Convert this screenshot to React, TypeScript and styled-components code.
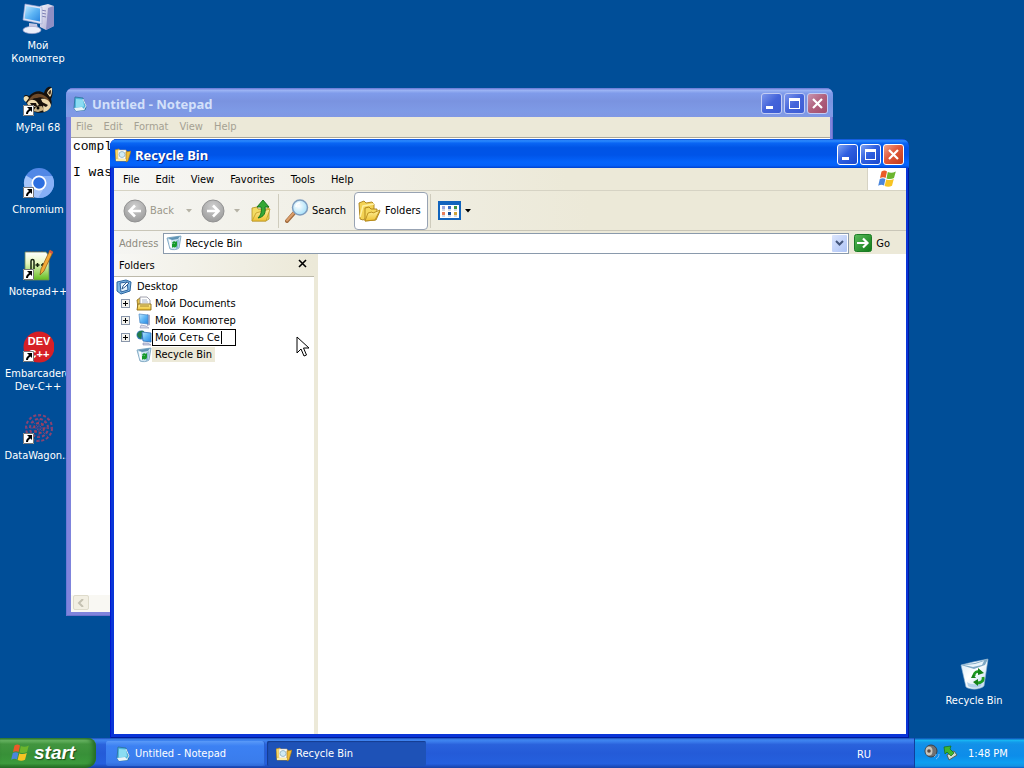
import React from "react";
import styled, { createGlobalStyle, css } from "styled-components";

const uiFont = '"DejaVu Sans Condensed", "Noto Sans", sans-serif';
const titleFont = '"Noto Sans", "DejaVu Sans", sans-serif';

const GlobalStyle = createGlobalStyle`
  * { box-sizing: border-box; }
  html, body { margin: 0; height: 100%; }
  body { font: 11px/13px "Noto Sans", sans-serif; color: #000; overflow: hidden; }
  button, input, textarea { font: inherit; color: inherit; margin: 0; padding: 0; border: 0; background: none; outline: 0; }
  button { white-space: nowrap; }
  svg { display: block; flex: none; }
  a { color: inherit; text-decoration: none; }
`;

/* ---------- shared gradients ---------- */

const Hidden = styled.svg`
  position: absolute;
`;

const Defs = () => (
  <Hidden width="0" height="0" aria-hidden="true">
    <defs>
      <linearGradient id="screen" x1="0" y1="0" x2="1" y2="1">
        <stop offset="0" stopColor="#bfe9ff" />
        <stop offset=".5" stopColor="#5fb6f5" />
        <stop offset="1" stopColor="#2a86e0" />
      </linearGradient>
      <linearGradient id="case" x1="0" y1="0" x2="1" y2="1">
        <stop offset="0" stopColor="#f4f4fc" />
        <stop offset="1" stopColor="#a2a2cc" />
      </linearGradient>
      <linearGradient id="bin" x1="0" y1="0" x2="1" y2="1">
        <stop offset="0" stopColor="#cfe6f5" />
        <stop offset=".45" stopColor="#ffffff" />
        <stop offset="1" stopColor="#b5d3ea" />
      </linearGradient>
      <linearGradient id="folder" x1="0" y1="0" x2="0" y2="1">
        <stop offset="0" stopColor="#fff3a0" />
        <stop offset="1" stopColor="#efc132" />
      </linearGradient>
      <radialGradient id="grey" cx=".5" cy=".3" r=".7">
        <stop offset="0" stopColor="#cfcfcf" />
        <stop offset="1" stopColor="#9c9c9c" />
      </radialGradient>
      <radialGradient id="lens" cx=".4" cy=".4" r=".7">
        <stop offset="0" stopColor="#ffffff" />
        <stop offset="1" stopColor="#9bdcf8" />
      </radialGradient>
      <linearGradient id="go" x1="0" y1="0" x2="1" y2="1">
        <stop offset="0" stopColor="#5cbb5c" />
        <stop offset="1" stopColor="#0e7a15" />
      </linearGradient>
      <linearGradient id="npp" x1="0" y1="0" x2="0" y2="1">
        <stop offset="0" stopColor="#ffffff" />
        <stop offset=".4" stopColor="#e6f6c0" />
        <stop offset="1" stopColor="#62bc1e" />
      </linearGradient>
    </defs>
  </Hidden>
);

/* ---------- icons ---------- */

const ComputerIcon = () => (
  <svg width="32" height="32" viewBox="0 0 32 32" aria-hidden="true">
    <path d="M18 3l8-2 6 2v20l-8 4-6-3z" fill="url(#case)" />
    <path d="M26 5l6-2v20l-8 4z" fill="#8f8fc4" />
    <path d="M19 7l5 1M19 10l5 1M19 13l5 1" stroke="#7d80b4" />
    <path d="M3 1l17 3v17L1 17z" fill="#dfe4f6" stroke="#9aa4d2" strokeWidth=".6" />
    <path d="M4 3l14 2.400v13L2.500 15.500z" fill="url(#screen)" />
    <path d="M7 20l8 1 1 5-9-1z" fill="#c3c6e2" />
    <ellipse cx="10" cy="27" rx="9" ry="3.600" fill="#eceefa" stroke="#a6a9d0" strokeWidth=".7" />
  </svg>
);

const RaccoonIcon = () => (
  <svg width="32" height="32" viewBox="0 0 32 32" aria-hidden="true">
    <path d="M2 13c-1-3 2-4 5-2 5-5 10-6 15-3 1-4 4-7 7-6 2 3 2 8 0 12 2 6-1 11-6 13-7 2-15 0-17-6z" fill="#17110c" />
    <path d="M2 12c2-2 4-1 5 1l-3 4c-2-1-3-3-2-5zM25 8c1-3 3-5 5-5 0 3 0 7-2 9z" fill="#f1dfb0" />
    <path d="M26 8c1-2 2-3 3-3 0 2 0 4-1 5z" fill="#4b3220" />
    <path d="M9 12c4-4 9-4 14-1 3 2 5 4 5 8-4-6-8-8-13-6-4 0-7 2-9 5 0-2 1-4 3-6z" fill="#6d4a2a" />
    <path d="M5 18c3-4 7-4 10-1l2 3-5 2c-3 1-6-1-7-4zM19 14c5-1 9 2 10 6 0 3-3 6-7 7-2-1 1-5-3-13z" fill="#ecd9ae" />
    <path d="M8 18l6 0 1 3-5 0zM20 17l6 3-2 2-4-2z" fill="#1a120d" />
    <path d="M14 22l6-1 2 4-6 2-5-1z" fill="#c8b184" />
    <circle cx="16" cy="23" r="1.500" fill="#000" />
  </svg>
);

const ChromiumIcon = () => (
  <svg width="32" height="32" viewBox="0 0 32 32" aria-hidden="true">
    <circle cx="17" cy="16" r="15" fill="#5288e6" />
    <path d="M17 16L4 8.500A15 15 0 0 0 17 31l6-11z" fill="#a5c5fa" />
    <path d="M17 9h13.300A15 15 0 0 1 16 31l7.500-12z" fill="#86b0f7" />
    <circle cx="17" cy="16" r="7.500" fill="#fff" />
    <circle cx="17" cy="16" r="5.800" fill="#2d6fe0" />
  </svg>
);

const NppIcon = () => (
  <svg width="32" height="32" viewBox="0 0 32 32" aria-hidden="true">
    <path d="M3 3h21l3 4v24H3z" fill="url(#npp)" stroke="#6f8a58" strokeWidth=".8" />
    <path d="M5 3v-1M8 3v-1M11 3v-1M14 3v-1M17 3v-1M20 3v-1" stroke="#556" strokeWidth="1.500" />
    <path d="M9 20v-8q0-1.500 1.500-1.500T12 12v8M13.500 16h4M15.500 14v4M19 16h4M21 14v4" stroke="#16240f" strokeWidth="1.500" fill="none" />
    <path d="M28 1l3 2-9 19-4 4 1-6z" fill="#f2ab37" stroke="#8d5313" strokeWidth=".7" />
    <path d="M28 1l3 2-1 2-3-2z" fill="#d5524b" />
  </svg>
);

const DevIcon = () => (
  <svg width="32" height="32" viewBox="0 0 32 32" aria-hidden="true">
    <circle cx="17" cy="16" r="15.500" fill="#d61f26" />
    <text x="17" y="14" textAnchor="middle" fontFamily="Liberation Sans, sans-serif" fontWeight="700" fontSize="11" fill="#fff">DEV</text>
    <text x="17" y="27" textAnchor="middle" fontFamily="Liberation Sans, sans-serif" fontWeight="700" fontSize="11" fill="#fff">C++</text>
  </svg>
);

const WagonIcon = () => (
  <svg width="32" height="32" viewBox="0 0 32 32" aria-hidden="true">
    <g fill="none" stroke="#8d4470" strokeWidth="2" strokeDasharray="3 2">
      <circle cx="17" cy="15" r="13" />
      <circle cx="17" cy="15" r="9" strokeDashoffset="2" />
      <circle cx="17" cy="15" r="5" stroke="#a03f5c" />
      <path d="M17 1v28M3 15h28M7 5l20 20M27 5L7 25" stroke="#6d4380" strokeWidth="1" />
    </g>
  </svg>
);

const BinIcon = () => (
  <svg width="32" height="32" viewBox="0 0 32 32" aria-hidden="true">
    <path d="M3 7l12-3 15-3-4 27c-4 4-14 4-18 1z" fill="url(#bin)" stroke="#8fb4d2" strokeWidth=".6" />
    <path d="M3 7l14-2 13-4-3 6-11 4z" fill="#7da7c4" />
    <path d="M6 7l11-1 9-3-2 4-9 2z" fill="#e8f4fb" />
    <path d="M9 24c4 3 10 3 15 0l-1 4c-4 2-10 2-13 0z" fill="#9cc4e4" opacity=".7" />
    <g fill="none" stroke="#1d9a20" strokeWidth="2.800">
      <path d="M16 18c0-4 3-5 6-4" />
      <path d="M25 19c1 4-2 6-6 6" />
    </g>
    <path d="M20 10l6 5-6 2zM20 21v7l-5-4zM15 16l3 4h-5z" fill="#158018" />
  </svg>
);

const SmallBinIcon = () => (
  <svg width="16" height="16" viewBox="0 0 16 16" aria-hidden="true">
    <path d="M1 3l6-1 8-1-2 12c-2 2-7 2-9 1z" fill="#cfe5f2" stroke="#6f9cba" strokeWidth=".8" />
    <path d="M2 3l7-1 5-1-2 3-6 1z" fill="#5f93b4" />
    <path d="M3 5l2 0 1 8-2-1z" fill="#fff" />
    <path d="M13 4l-1 9-2 1V6z" fill="#8db9d2" />
    <path d="M6 8c1-2 3-2 4-1l1-1v4H8l1-1c-1-1-1 0-2 0zM11 10c0 2-2 3-4 2l-1 1V9h3z" fill="#169a2a" />
  </svg>
);

const NotepadIcon = () => (
  <svg width="16" height="16" viewBox="0 0 16 16" aria-hidden="true">
    <path d="M3 1l8 1 3 9-1 3-9 1-2-3z" fill="#4fb6dc" stroke="#2b6f98" strokeWidth=".8" />
    <path d="M4 3l7 .500 1 7-8 1z" fill="#8bdcf2" />
    <path d="M2 12l8-1 3 3-9 1z" fill="#e9f3f8" />
    <path d="M11 3l3 7-2 3" stroke="#dbe8ef" fill="none" />
  </svg>
);

const FolderSearchIcon = () => (
  <svg width="16" height="16" viewBox="0 0 16 16" aria-hidden="true">
    <path d="M0 3l4-1 1 2h7v10H1z" fill="#f8d968" stroke="#b98a1f" strokeWidth=".7" />
    <path d="M3 3h8v9H3z" fill="#fff" stroke="#c8b686" strokeWidth=".5" />
    <circle cx="7" cy="7.500" r="3" fill="#cfeaf4" stroke="#8fb0bb" strokeWidth=".8" />
    <path d="M11 5l5-1-3 10-2 1z" fill="#f0bd38" stroke="#9f741a" strokeWidth=".6" />
    <path d="M1 12h10v2H1z" fill="#fdeea6" />
  </svg>
);

const Flag = () => (
  <svg width="20" height="20" viewBox="0 0 20 20" aria-hidden="true">
    <path d="M4.500 2.500C7 1 8.500 1.500 10 2.500L8.600 9C7 8 5.500 7.800 3 9z" fill="#ea5a28" />
    <path d="M10.800 3c2.500 1.300 5 1 8-.5L17 9c-2.500 1.300-5 1.300-7.500.4z" fill="#6cb52d" />
    <path d="M2.800 10C5 8.800 6.800 9 8.400 10L7 16.500c-1.600-1-3.500-1-5.800.2z" fill="#4a86dc" />
    <path d="M9.200 10.400c2.400 1 5 1 7.600-.3L15 16.800c-2.400 1.200-5 1.200-7.400.1z" fill="#f7c423" />
  </svg>
);

const RoundArrow = ({ forward }: { forward?: boolean }) => (
  <svg width="24" height="24" viewBox="0 0 24 24" aria-hidden="true">
    <circle cx="12" cy="12" r="11" fill="url(#grey)" stroke="#929292" />
    <path d={forward ? "M6 12h11M12 6.500l5.500 5.500L12 17.500" : "M18 12H7M12 6.500L6.500 12l5.500 5.500"} fill="none" stroke="#fff" strokeWidth="2.600" />
  </svg>
);

const UpFolderIcon = () => (
  <svg width="24" height="24" viewBox="0 0 24 24" aria-hidden="true">
    <path d="M3 9l5-1 1 2h9l1-2 1 1v11l-3 2H3z" fill="#f3dc62" stroke="#b0901f" strokeWidth=".8" />
    <path d="M3 22l4-8 14-4-4 12z" fill="url(#folder)" stroke="#c09b26" strokeWidth=".8" />
    <path d="M14 1l6 7h-4c1 6-1 10-7 11 3-3 4-7 3-11H8z" fill="#35a835" stroke="#137019" strokeWidth=".9" />
  </svg>
);

const SearchIcon = () => (
  <svg width="24" height="24" viewBox="0 0 24 24" aria-hidden="true">
    <path d="M10 13L2 22" stroke="#9f6a3d" strokeWidth="4" strokeLinecap="round" />
    <path d="M9.500 13L2 21.500" stroke="#dc9e6b" strokeWidth="2" strokeLinecap="round" />
    <circle cx="15" cy="8.500" r="7.500" fill="url(#lens)" stroke="#7e9dbf" strokeWidth="1.500" />
    <path d="M11 8c0-3 2-4 4-4" fill="none" stroke="#fff" strokeWidth="1.500" />
  </svg>
);

const FoldersIcon = () => (
  <svg width="24" height="24" viewBox="0 0 24 24" aria-hidden="true">
    <path d="M1 4l5-2 2 2 6-1 2 2v10l-11 6-3-1z" fill="#f3d254" stroke="#a97f16" strokeWidth=".9" />
    <path d="M2 18L5 7l11-2" fill="none" stroke="#fff0a0" strokeWidth="1.500" />
    <path d="M7 9l4-1 2 2h6v3l3-1-4 9-11 1z" fill="#f6d95e" stroke="#a97f16" strokeWidth=".9" />
    <path d="M7 22l3-8 4-1 1 1 7-3-5 10z" fill="url(#folder)" stroke="#b78a18" strokeWidth=".9" />
  </svg>
);

const ViewsIcon = () => (
  <svg width="24" height="20" viewBox="0 0 24 20" aria-hidden="true">
    <path d="M0 0h23v19H0z" fill="#1264bd" />
    <path d="M2 4h19v13H2z" fill="#fff" />
    <path d="M4 5h3v3H4z" fill="#9aa7df" />
    <path d="M10 5h3v3h-3z" fill="#3f6fc8" />
    <path d="M16 5h3v3h-3z" fill="#3c9440" />
    <path d="M4 11h3v3H4z" fill="#e77f5b" />
    <path d="M10 11h3v3h-3z" fill="#164b94" />
    <path d="M16 11h3v3h-3z" fill="#cda33b" />
    <path d="M4 9h3M10 9h3M16 9h3M4 15h3M10 15h3M16 15h3" stroke="#a9bccc" />
  </svg>
);

const Triangle = ({ colour = "#000" }: { colour?: string }) => (
  <svg width="6" height="4" viewBox="0 0 6 4" aria-hidden="true">
    <path d="M0 0h6L3 3.500z" fill={colour} />
  </svg>
);

const GoIcon = () => (
  <svg width="18" height="18" viewBox="0 0 18 18" aria-hidden="true">
    <rect x=".5" y=".5" width="17" height="17" rx="2" fill="url(#go)" stroke="#1c7c26" />
    <path d="M3 9h10M9 4.500L13.500 9 9 13.500" fill="none" stroke="#fff" strokeWidth="2.200" />
  </svg>
);

const DesktopIcon = () => (
  <svg width="16" height="16" viewBox="0 0 16 16" aria-hidden="true">
    <path d="M1 3l9-2 5 2-1 9-9 3-4-3z" fill="#7db7e4" stroke="#2a649e" />
    <path d="M4 4l7-1 1 8-7 2z" fill="#e3f2fc" stroke="#2b619e" />
    <path d="M6 10l1-3 4-4 2 1-4 4z" fill="#fff" stroke="#204f86" strokeWidth=".9" />
  </svg>
);

const DocumentsIcon = () => (
  <svg width="16" height="16" viewBox="0 0 16 16" aria-hidden="true">
    <path d="M1 4l3-2 1 2v9l-3-1z" fill="#e6c34e" stroke="#8c6a12" strokeWidth=".8" />
    <path d="M4 1h7l3 3v6H4z" fill="#fff" stroke="#8b8b9a" strokeWidth=".8" />
    <path d="M6 4h5M6 6h6" stroke="#a9b4c8" />
    <path d="M1 14l1-6h13v6z" fill="url(#folder)" stroke="#8c6a12" strokeWidth=".9" />
    <path d="M4 10h9" stroke="#a4812a" />
  </svg>
);

const SmallComputerIcon = () => (
  <svg width="16" height="16" viewBox="0 0 16 16" aria-hidden="true">
    <path d="M11 1l3 1v10l-3 1z" fill="#a9adc9" />
    <path d="M3 1l9 1v9l-8-1z" fill="url(#screen)" stroke="#4b86c4" strokeWidth=".7" />
    <path d="M5 12l5 1 3 2H4z" fill="#d8daea" stroke="#8d91b4" strokeWidth=".6" />
  </svg>
);

const NetworkIcon = () => (
  <svg width="16" height="16" viewBox="0 0 16 16" aria-hidden="true">
    <circle cx="5" cy="5" r="4.500" fill="#3c7ec6" />
    <path d="M1 4c2-3 4-4 7-3L6 5l-1 4C3 8 1 7 1 4z" fill="#237c4a" />
    <path d="M6 2l9 1v9l-8-1z" fill="url(#screen)" stroke="#2f6eb4" strokeWidth=".8" />
    <path d="M7 13l5 0 3 2H7z" fill="#cfd3e6" stroke="#8188b0" strokeWidth=".6" />
  </svg>
);

const SpeakerIcon = () => (
  <svg width="18" height="18" viewBox="0 0 18 18" aria-hidden="true">
    <ellipse cx="8" cy="7" rx="6" ry="6" fill="#6f7071" stroke="#3c4046" />
    <ellipse cx="6" cy="7" rx="3.500" ry="4.500" fill="#c9c5bb" />
    <circle cx="6" cy="7" r="1.800" fill="#5a4b45" />
    <path d="M13 15c2-1 3-3 3-5M11 13c1-1 2-2 2-3" fill="none" stroke="#8fc1f1" />
  </svg>
);

const EjectIcon = () => (
  <svg width="16" height="16" viewBox="0 0 16 16" aria-hidden="true">
    <path d="M4 10l7-4 3 4-8 5z" fill="#d4dcd2" stroke="#4c5c50" strokeWidth=".9" />
    <path d="M1 2l7-1-1 3 4 4-3 3-4-4-2 2z" fill="#3fb52f" stroke="#156f14" strokeWidth=".7" />
  </svg>
);

const ShortcutArrow = () => (
  <svg width="11" height="11" viewBox="0 0 11 11" aria-hidden="true">
    <path d="M0 0h11v11H0z" fill="#fff" />
    <path d="M.5.500h10v10H.5z" fill="none" stroke="#777" />
    <path d="M4 2h5v5L7.500 5.500C6 6.500 5 7.500 5 9H3c0-2 1-3.500 3-5z" fill="#000" />
  </svg>
);

/* ---------- desktop ---------- */

const Desktop = styled.main`
  position: relative;
  display: flex;
  flex-direction: column;
  height: 100vh;
  background: #004e98;
  overflow: hidden;
`;

const Surface = styled.div`
  position: relative;
  flex: 1;
  display: flex;
  justify-content: space-between;
  align-items: flex-end;
`;

const ShortcutColumn = styled.nav`
  display: grid;
  grid-auto-rows: 82px;
  width: 76px;
  align-self: flex-start;
  padding-top: 3px;
`;

const Shortcut = styled.a`
  display: flex;
  flex-direction: column;
  align-items: center;
  gap: 4px;
  width: 76px;
  color: #fff;
  font: 11px/13px ${uiFont};
  text-align: center;
`;

const BinCorner = styled.div`
  height: 80px;
  padding-right: 12px;
`;

const Picture = styled.span`
  position: relative;
`;

const Badge = styled.span`
  position: absolute;
  left: 1px;
  bottom: 1px;
`;

const Label = styled.span`
  width: 72px;
`;

const shortcuts = [
  { label: "Мой Компютер", icon: <ComputerIcon />, linked: false },
  { label: "MyPal 68", icon: <RaccoonIcon />, linked: true },
  { label: "Chromium", icon: <ChromiumIcon />, linked: true },
  { label: "Notepad++", icon: <NppIcon />, linked: true },
  { label: "Embarcadero Dev-C++", icon: <DevIcon />, linked: true },
  { label: "DataWagon...", icon: <WagonIcon />, linked: true },
];

/* ---------- windows ---------- */

const Frame = styled.section<{ $active?: boolean }>`
  position: absolute;
  display: flex;
  flex-direction: column;
  border-radius: 7px 7px 0 0;
  overflow: hidden;
  ${({ $active }) =>
    $active
      ? css`
          inset: 139px 115px 0 110px;
          padding: 0 3px 4px 4px;
          background: #0a35d8;
          box-shadow: inset 1px 0 #0019cf, inset -1px -1px #001a9c;
        `
      : css`
          inset: 88px 191px 122px 66px;
          padding: 0 3px 4px 5px;
          background: #7f84dc;
          box-shadow: inset 1px 0 #6a78d6, inset -1px -1px #6d70cc;
        `}
`;

const TitleBar = styled.header<{ $active?: boolean }>`
  display: flex;
  align-items: center;
  gap: 4px;
  height: 29px;
  flex: none;
  margin: 0 -3px 0 -5px;
  padding: 2px 5px 0 6px;
  font: bold 13px/18px ${titleFont};
  color: ${(p) => (p.$active ? "#fff" : "#d3e0fa")};
  text-shadow: ${(p) => (p.$active ? "1px 1px #0a2a8c" : "none")};
  background: ${(p) =>
    p.$active
      ? "linear-gradient(#0a4ad6 0, #2c8cff 6%, #0a66f4 14%, #0054e6 30%, #0054e8 55%, #0464fc 80%, #0460f8 92%, #0040cc 100%)"
      : "linear-gradient(#6474d4 0, #9cb4f4 8%, #7f9bea 18%, #7a93e0 45%, #7e9ae6 80%, #8098e4 100%)"};
`;

const WindowTitle = styled.h2`
  flex: 1;
  margin: 0;
  font: inherit;
`;

const Controls = styled.div`
  display: flex;
  gap: 2px;
`;

const ControlButton = styled.button<{ $close?: boolean; $active?: boolean }>`
  display: grid;
  place-items: center;
  width: 21px;
  height: 21px;
  border: 1px solid ${(p) => (p.$active ? "#fff" : "#c3cdf4")};
  border-radius: 3px;
  background: ${(p) =>
    p.$close
      ? p.$active
        ? "linear-gradient(135deg, #f0a48c, #e0583a 45%, #c23a1a)"
        : "linear-gradient(135deg, #c795b0, #b0607c 50%, #a04c6c)"
      : p.$active
        ? "linear-gradient(135deg, #7ea4f4, #2f5fe0 45%, #1a48cc)"
        : "linear-gradient(135deg, #7c96ec, #4464da 50%, #3c5cd4)"};
`;

const WindowControls = ({ active }: { active?: boolean }) => (
  <Controls>
    <ControlButton $active={active} aria-label="Minimize">
      <svg width="15" height="15" viewBox="0 0 15 15"><path d="M2 10h7v3H2z" fill="#fff" /></svg>
    </ControlButton>
    <ControlButton $active={active} aria-label="Maximize">
      <svg width="15" height="15" viewBox="0 0 15 15"><path d="M2 2h11v11H2zM3 5v7h9V5z" fillRule="evenodd" fill="#fff" /></svg>
    </ControlButton>
    <ControlButton $active={active} $close aria-label="Close">
      <svg width="15" height="15" viewBox="0 0 15 15"><path d="M3 3l9 9M12 3l-9 9" stroke="#fff" strokeWidth="2.200" /></svg>
    </ControlButton>
  </Controls>
);

const MenuBar = styled.nav<{ $muted?: boolean }>`
  display: flex;
  align-items: center;
  flex: none;
  height: ${(p) => (p.$muted ? 20 : 22)}px;
  padding: ${(p) => (p.$muted ? "0 0 2px 5px" : "0 0 0 1px")};
  gap: ${(p) => (p.$muted ? 11 : 0)}px;
  font: 11px/13px ${uiFont};
  color: ${(p) => (p.$muted ? "#a5a193" : "#000")};
  background: ${(p) => (p.$muted ? "#ece9d8" : "linear-gradient(90deg, #f7f7f5, #ece9d8 60%)")};
`;

const MenuItem = styled.button<{ $padded?: boolean }>`
  padding: 0 ${(p) => (p.$padded ? 8 : 0)}px;
`;

/* ---------- notepad ---------- */

const Editor = styled.div`
  display: flex;
  flex-direction: column;
  flex: 1;
  border-top: 1px solid #aca899;
  background: #fff;
`;

const EditorText = styled.textarea`
  flex: 1;
  padding: 2px;
  resize: none;
  overflow: hidden;
  font: 13px/13px "Liberation Mono", monospace;
`;

const ScrollTrack = styled.div`
  height: 17px;
  padding: 0 2px;
  background: #f9f8f3;
`;

const ScrollButton = styled.button`
  display: grid;
  place-items: center;
  width: 16px;
  height: 15px;
  border: 1px solid #dedbcb;
  border-radius: 2px;
  background: #f2efe3;
`;

/* ---------- explorer ---------- */

const MenuRow = styled.div`
  display: flex;
  border-bottom: 1px solid #d6d3c4;
  & > nav { flex: 1; }
`;

const Throbber = styled.div`
  display: grid;
  place-items: center;
  width: 39px;
  background: #fff;
  border-left: 1px solid #d6d3c4;
`;

const Toolbar = styled.div`
  display: flex;
  align-items: center;
  flex: none;
  height: 40px;
  padding: 0 9px;
  border-bottom: 1px solid #c9c6b8;
  font: 11px/13px ${uiFont};
  background: linear-gradient(90deg, #f5f5f2, #ece9d8 60%);
`;

const ToolButton = styled.button<{ $width?: number; $pressed?: boolean; $muted?: boolean }>`
  display: flex;
  align-items: center;
  gap: 3px;
  width: ${(p) => (p.$width ? `${p.$width}px` : "auto")};
  height: ${(p) => (p.$pressed ? 38 : 32)}px;
  padding: 0 ${(p) => (p.$pressed ? 3 : 0)}px;
  color: ${(p) => (p.$muted ? "#9b988b" : "#000")};
  ${(p) =>
    p.$pressed &&
    css`
      border: 1px solid #98a3b3;
      border-radius: 4px;
      background: #fff;
    `}
`;

const DropMark = styled.button`
  display: grid;
  place-items: center;
  width: 24px;
  height: 32px;
`;

const Divider = styled.span<{ $tight?: boolean }>`
  width: 1px;
  height: 34px;
  margin: ${(p) => (p.$tight ? "0 7px 0 2px" : "0 6px 0 5px")};
  background: #cfccbd;
`;

const AddressBar = styled.form`
  display: flex;
  align-items: center;
  flex: none;
  height: 23px;
  padding: 1px 16px 0 5px;
  gap: 5px;
  font: 11px/13px ${uiFont};
  background: linear-gradient(90deg, #f5f5f2, #ece9d8 60%);
`;

const AddressLabel = styled.label`
  color: #8f8c80;
`;

const Combo = styled.div`
  display: flex;
  flex: 1;
  align-items: center;
  gap: 3px;
  height: 21px;
  padding: 0 1px 0 2px;
  border: 1px solid #8a9aac;
  background: #fff;
`;

const ComboInput = styled.input`
  flex: 1;
  min-width: 0;
`;

const ComboArrow = styled.button`
  display: grid;
  place-items: center;
  width: 15px;
  height: 17px;
  border-radius: 1px;
  background: linear-gradient(135deg, #dbe5fd, #aec4f6);
`;

const GoButton = styled.button`
  display: flex;
  align-items: center;
  gap: 4px;
`;

const Panes = styled.div`
  display: flex;
  flex: 1;
  background: #fff;
`;

const FolderPane = styled.aside`
  width: 204px;
  border-right: 4px solid #ece9d8;
  font: 11px/13px ${uiFont};
`;

const PaneHeader = styled.div`
  display: flex;
  align-items: center;
  justify-content: space-between;
  height: 23px;
  padding: 0 7px 0 5px;
  border-bottom: 1px solid #bdbaab;
  background: linear-gradient(90deg, #f7f7f4, #ece9d8);
`;

const CloseMark = styled.button`
  padding-bottom: 4px;
`;

const Tree = styled.ul`
  margin: 0;
  padding: 1px 0 0 2px;
  list-style: none;
`;

const TreeRow = styled.li<{ $child?: boolean }>`
  display: flex;
  align-items: center;
  height: 17px;
  padding-left: ${(p) => (p.$child ? 5 : 0)}px;
  gap: ${(p) => (p.$child ? 0 : 2)}px;
`;

const Expander = styled.button<{ $empty?: boolean }>`
  display: grid;
  place-items: center;
  width: 9px;
  height: 9px;
  margin-right: 6px;
  border: 1px solid #8a97ab;
  background: #f4f3ee;
  visibility: ${(p) => (p.$empty ? "hidden" : "visible")};
`;

const ItemName = styled.span<{ $selected?: boolean }>`
  padding: 1px 3px;
  white-space: pre;
  background: ${(p) => (p.$selected ? "#ece9d8" : "none")};
`;

const RenameBox = styled.span`
  display: flex;
  align-items: center;
  width: 84px;
  height: 17px;
  padding: 0 2px;
  border: 1px solid #000;
  background: #fff;
`;

const RenameInput = styled.input`
  width: 66px;
`;

const Caret = styled.span`
  width: 1px;
  height: 13px;
  background: #000;
`;

const FileArea = styled.div`
  flex: 1;
`;

const Pointer = styled.svg`
  position: absolute;
  left: 296px;
  top: 336px;
`;

/* ---------- taskbar ---------- */

const Taskbar = styled.footer`
  display: flex;
  flex: none;
  height: 30px;
  color: #fff;
  font: 11px/13px ${uiFont};
  background: linear-gradient(#1c4cb8 0, #3f86f0 6%, #3a7cec 12%, #2a62dc 22%, #245bd8 50%, #2560de 86%, #1d4ec0 94%, #1941a5 100%);
`;

const StartButton = styled.button`
  display: flex;
  align-items: center;
  gap: 4px;
  width: 96px;
  padding: 0 0 0 10px;
  border-radius: 0 8px 10px 0;
  font: italic bold 19px/22px "Liberation Sans", sans-serif;
  text-shadow: 1px 1px 1px #1c4a1c;
  background: linear-gradient(#2f7a2f 0, #6cb866 8%, #42953f 20%, #389038 55%, #3c9a3c 85%, #246c24 100%);
  box-shadow: inset -3px 0 4px #256b25;
`;

const Tasks = styled.div`
  display: flex;
  flex: 1;
  gap: 2px;
  padding: 3px 0 2px 10px;
`;

const TaskButton = styled.button<{ $current?: boolean }>`
  display: flex;
  align-items: center;
  gap: 4px;
  width: 159px;
  padding: 0 9px;
  border-radius: 2px;
  background: ${(p) => (p.$current ? "#1e52b7" : "linear-gradient(#5a9af8, #3c81f3 20%, #3a7cec 85%, #2f6ad8)")};
  box-shadow: ${(p) => (p.$current ? "inset 1px 1px 1px #143c90" : "inset -1px 0 #2a63cf")};
`;

const Language = styled.button`
  padding: 2px 43px 0 0;
`;

const Tray = styled.div`
  display: flex;
  align-items: center;
  gap: 2px;
  width: 110px;
  padding-left: 8px;
  border-left: 1px solid #0f3f9c;
  background: linear-gradient(#0c59b9 1%, #18b5f2 8%, #139beb 14%, #1290e8 22%, #0d8dea 60%, #0d9ff1 82%, #1392e2 94%, #095bc9 100%);
`;

const Clock = styled.time`
  padding-left: 7px;
`;

const tree = [
  { name: "Мой Documents", icon: <DocumentsIcon />, expandable: true },
  { name: "Мой  Компютер", icon: <SmallComputerIcon />, expandable: true },
  { name: "Мой Сеть Се", icon: <NetworkIcon />, expandable: true, renaming: true },
  { name: "Recycle Bin", icon: <SmallBinIcon />, expandable: false, selected: true },
];

const NotepadWindow = () => (
  <Frame aria-label="Untitled - Notepad">
    <TitleBar>
      <NotepadIcon />
      <WindowTitle>Untitled - Notepad</WindowTitle>
      <WindowControls />
    </TitleBar>
    <MenuBar $muted>
      {["File", "Edit", "Format", "View", "Help"].map((m) => (
        <MenuItem key={m}>{m}</MenuItem>
      ))}
    </MenuBar>
    <Editor>
      <EditorText aria-label="Document text" spellCheck={false} defaultValue={"compl\n\nI was"} />
      <ScrollTrack>
        <ScrollButton aria-label="Scroll left">
          <svg width="8" height="8" viewBox="0 0 8 8"><path d="M6 0L2 4l4 4" fill="none" stroke="#c4c1b2" strokeWidth="2" /></svg>
        </ScrollButton>
      </ScrollTrack>
    </Editor>
  </Frame>
);

const ExplorerWindow = () => (
  <Frame $active aria-label="Recycle Bin">
    <TitleBar $active>
      <FolderSearchIcon />
      <WindowTitle>Recycle Bin</WindowTitle>
      <WindowControls active />
    </TitleBar>
    <MenuRow>
      <MenuBar>
        {["File", "Edit", "View", "Favorites", "Tools", "Help"].map((m) => (
          <MenuItem key={m} $padded>{m}</MenuItem>
        ))}
      </MenuBar>
      <Throbber><Flag /></Throbber>
    </MenuRow>
    <Toolbar>
      <ToolButton $width={54} $muted><RoundArrow />Back</ToolButton>
      <DropMark aria-label="Back history"><Triangle colour="#b5b2a5" /></DropMark>
      <ToolButton $width={24} aria-label="Forward"><RoundArrow forward /></ToolButton>
      <DropMark aria-label="Forward history"><Triangle colour="#b5b2a5" /></DropMark>
      <ToolButton $width={24} aria-label="Up"><UpFolderIcon /></ToolButton>
      <Divider />
      <ToolButton $width={69}><SearchIcon />Search</ToolButton>
      <ToolButton $width={74} $pressed aria-pressed="true"><FoldersIcon />Folders</ToolButton>
      <Divider $tight />
      <ToolButton aria-label="Views"><ViewsIcon /><Triangle /></ToolButton>
    </Toolbar>
    <AddressBar onSubmit={(e) => e.preventDefault()}>
      <AddressLabel htmlFor="address">Address</AddressLabel>
      <Combo>
        <SmallBinIcon />
        <ComboInput id="address" defaultValue="Recycle Bin" />
        <ComboArrow type="button" aria-label="Show addresses">
          <svg width="9" height="6" viewBox="0 0 9 6"><path d="M1 1l3.500 3.500L8 1" fill="none" stroke="#44567c" strokeWidth="2" /></svg>
        </ComboArrow>
      </Combo>
      <GoButton type="submit"><GoIcon />Go</GoButton>
    </AddressBar>
    <Panes>
      <FolderPane>
        <PaneHeader>
          Folders
          <CloseMark aria-label="Close folders">
            <svg width="9" height="9" viewBox="0 0 9 9"><path d="M1 1l7 7M8 1L1 8" stroke="#000" strokeWidth="1.600" /></svg>
          </CloseMark>
        </PaneHeader>
        <Tree>
          <TreeRow><DesktopIcon /><ItemName>Desktop</ItemName></TreeRow>
          {tree.map((item) => (
            <TreeRow key={item.name} $child>
              <Expander $empty={!item.expandable} aria-label={`Expand ${item.name}`}>
                <svg width="7" height="7" viewBox="0 0 7 7"><path d="M1 3h5v1H1zM3 1h1v5H3z" fill="#000" /></svg>
              </Expander>
              {item.icon}
              {item.renaming ? (
                <RenameBox>
                  <RenameInput aria-label="Name" defaultValue={item.name} />
                  <Caret />
                </RenameBox>
              ) : (
                <ItemName $selected={item.selected}>{item.name}</ItemName>
              )}
            </TreeRow>
          ))}
        </Tree>
      </FolderPane>
      <FileArea />
    </Panes>
  </Frame>
);

export default function App() {
  return (
    <Desktop>
      <GlobalStyle />
      <Defs />
      <Surface>
        <ShortcutColumn>
          {shortcuts.map((s) => (
            <Shortcut key={s.label} href="#">
              <Picture>
                {s.icon}
                {s.linked && <Badge><ShortcutArrow /></Badge>}
              </Picture>
              <Label>{s.label}</Label>
            </Shortcut>
          ))}
        </ShortcutColumn>
        <BinCorner>
          <Shortcut href="#">
            <BinIcon />
            <Label>Recycle Bin</Label>
          </Shortcut>
        </BinCorner>
        <NotepadWindow />
        <ExplorerWindow />
      </Surface>
      <Taskbar>
        <StartButton><Flag />start</StartButton>
        <Tasks>
          <TaskButton><NotepadIcon />Untitled - Notepad</TaskButton>
          <TaskButton $current><FolderSearchIcon />Recycle Bin</TaskButton>
        </Tasks>
        <Language>RU</Language>
        <Tray>
          <SpeakerIcon />
          <EjectIcon />
          <Clock>1:48 PM</Clock>
        </Tray>
      </Taskbar>
      <Pointer width="14" height="22" viewBox="0 0 14 22" aria-hidden="true">
        <path d="M1 1v16l4-4 3 7 2.500-1-3-7H13z" fill="#fff" stroke="#000" />
      </Pointer>
    </Desktop>
  );
}
